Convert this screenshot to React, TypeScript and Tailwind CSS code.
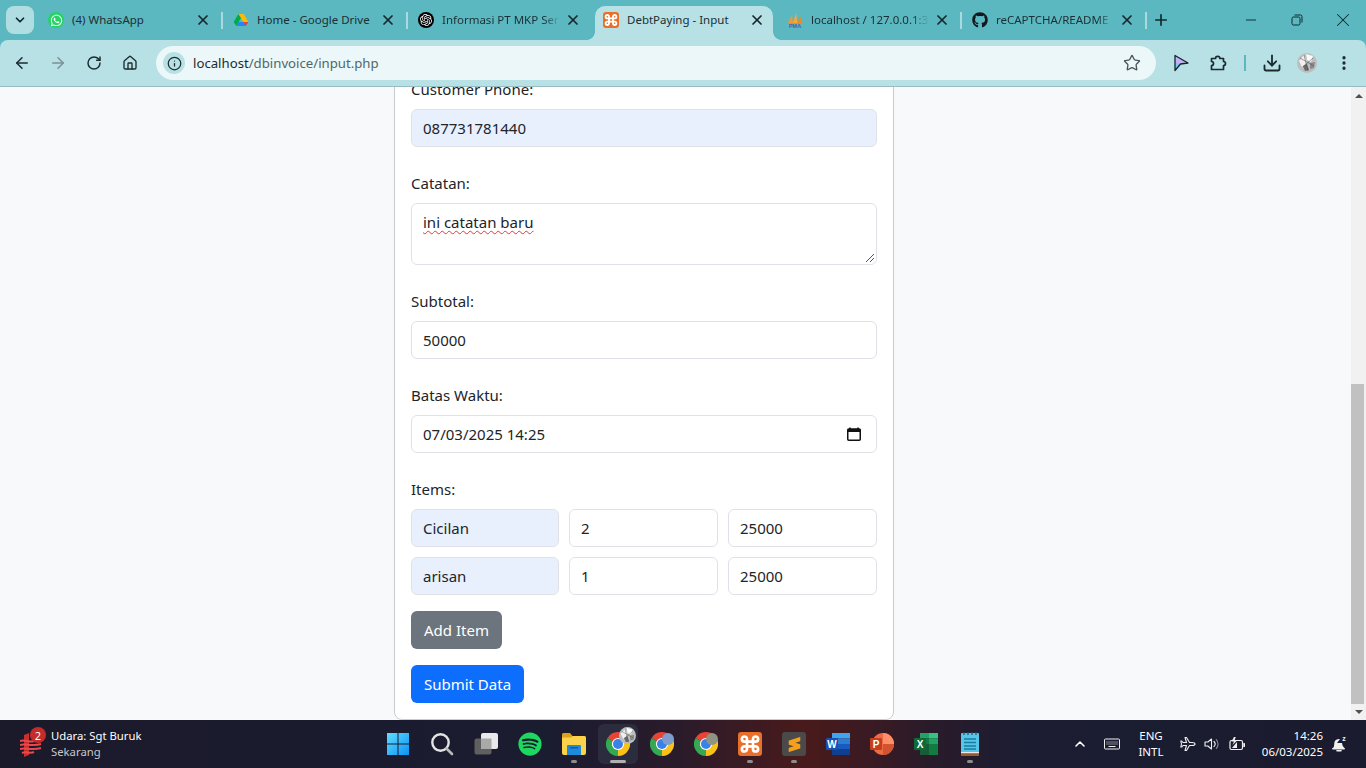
import type { ReactNode } from "react";
import {
  ArrowLeft, ArrowRight, ChevronDown, ChevronUp, Download, House, Info,
  Minus, MoreVertical, Plus, RotateCw, Star, X,
} from "lucide-react";
import { FaGithub, FaSpotify, FaWhatsapp } from "react-icons/fa";
import { SiOpenai, SiSublimetext } from "react-icons/si";

function ChromeLogo({ size = 24 }: { size?: number }) {
  return (
    <svg width={size} height={size} viewBox="1 1 22 22">
      <path d="M12 12 L2.47 6.5 A11 11 0 0 1 21.53 6.5 Z" fill="#ea4335" />
      <path d="M12 12 L2.47 6.5 A11 11 0 0 0 12 23 Z" fill="#34a853" />
      <path d="M12 12 L21.53 6.5 A11 11 0 0 1 12 23 Z" fill="#fbc116" />
      <circle cx="12" cy="12" r="5.6" fill="#fff" />
      <circle cx="12" cy="12" r="4.6" fill="#3b82e8" />
    </svg>
  );
}

function Avatar({ size = 20 }: { size?: number }) {
  return (
    <svg width={size} height={size} viewBox="0 0 20 20">
      <circle cx="10" cy="10" r="10" fill="#bdbdbd" />
      <path d="M2 8 L7 2 L10 9 L5 14 Z" fill="#f0f0f0" />
      <path d="M9 1 L16 3 L14 9 L10 7 Z" fill="#fafafa" />
      <path d="M6 13 L10 11 L12 17 L8 18 Z" fill="#6a6a6a" />
      <path d="M13 10 L18 9 L17 15 L13 16 Z" fill="#8a8a8a" />
      <path d="M3 5 L17 13 M7 2 L11 18 M16 5 L6 14" stroke="#4a4a4a" strokeWidth="0.5" />
    </svg>
  );
}

function XamppIcon({ size = 16 }: { size?: number }) {
  return (
    <span className="flex shrink-0 items-center justify-center rounded-[3px] bg-[#e8702a]" style={{ width: size, height: size }}>
      <svg width={size} height={size} viewBox="0 0 16 16" fill="none" stroke="#fff" strokeWidth="1.8">
        <path d="M6 6 V4.7 A1.7 1.7 0 1 0 4.3 6.4 H11.7 A1.7 1.7 0 1 0 10 4.7 V11.3 A1.7 1.7 0 1 0 11.7 9.6 H4.3 A1.7 1.7 0 1 0 6 11.3 Z" />
      </svg>
    </span>
  );
}

function DriveIcon() {
  return (
    <svg width="16" height="16" viewBox="0 0 24 24">
      <path d="M8 3 L16 3 L23 15 L15.5 15 Z" fill="#ffba00" />
      <path d="M8 3 L1 15 L5 21 L12 9 Z" fill="#00ac47" />
      <path d="M5 21 L19 21 L23 15 L8.6 15 Z" fill="#2684fc" />
      <path d="M19 21 L23 15 L15.5 15 Z" fill="#ea4335" />
    </svg>
  );
}

function PmaIcon() {
  return (
    <svg width="16" height="16" viewBox="0 0 16 16">
      <path d="M1 11 L5 3 L6 11 Z" fill="#f29a2e" />
      <path d="M6 11 L9 1 L10.5 11 Z" fill="#f6a937" />
      <path d="M11 11 L12.5 3 L15.5 11 Z" fill="#ec8a1e" />
      <text x="8" y="15.5" textAnchor="middle" fontSize="5.5" fontWeight="700" fill="#51609a" fontFamily="Liberation Sans, sans-serif">PMA</text>
    </svg>
  );
}

function CursorIcon() {
  return (
    <svg width="18" height="18" viewBox="0 0 18 18">
      <path d="M3 1.5 L16 9 L8.5 10 L3 16.5 Z" fill="#c3b2f6" />
      <path d="M3 8.5 L8.5 10 L3 16.5 Z" fill="#7cc8f0" />
      <path d="M3 1.5 L16 9 L8.5 10 L3 16.5 Z" fill="none" stroke="#16232a" strokeWidth="1.3" strokeLinejoin="round" />
    </svg>
  );
}

function ExtensionIcon() {
  return (
    <svg width="18" height="18" viewBox="0 0 18 18" fill="none" stroke="#1c2b2e" strokeWidth="1.7" strokeLinejoin="round">
      <path d="M2.5 4.5 H6.5 A2.2 2.2 0 0 1 10.9 4.5 H14.5 V7.5 A2 2 0 0 1 14.5 11.5 V15.5 H2.5 V11.5 A2 2 0 0 0 2.5 7.5 Z" />
    </svg>
  );
}

function RestoreIcon() {
  return (
    <svg width="12" height="12" viewBox="0 0 12 12" fill="none" stroke="#10282c" strokeWidth="1">
      <rect x="1" y="3" width="8" height="8" rx="1.5" />
      <path d="M3.5 1 H9.5 A1.5 1.5 0 0 1 11 2.5 V8.5" />
    </svg>
  );
}

function CalendarIcon() {
  return (
    <svg width="14" height="14" viewBox="0 0 14 14">
      <path d="M3 0.5 V3 M11 0.5 V3" stroke="#111" strokeWidth="1.5" />
      <rect x="0.75" y="2" width="12.5" height="11.25" rx="1" fill="none" stroke="#111" strokeWidth="1.5" />
      <rect x="0.75" y="2" width="12.5" height="3" fill="#111" />
    </svg>
  );
}

function WindowsLogo() {
  return (
    <svg width="24" height="24" viewBox="0 0 24 24">
      <defs>
        <linearGradient id="win" x1="0" y1="0" x2="1" y2="1">
          <stop offset="0" stopColor="#62dcff" />
          <stop offset="1" stopColor="#0b92f2" />
        </linearGradient>
      </defs>
      <path d="M1 1 H11.5 V11.5 H1 Z M12.5 1 H23 V11.5 H12.5 Z M1 12.5 H11.5 V23 H1 Z M12.5 12.5 H23 V23 H12.5 Z" fill="url(#win)" />
    </svg>
  );
}

function SearchIcon() {
  return (
    <svg width="24" height="24" viewBox="0 0 24 24" fill="none" strokeLinecap="round">
      <circle cx="10.5" cy="10.5" r="8.2" stroke="#e4e4e4" strokeWidth="2.4" />
      <path d="M16.5 16.5 L22 22" stroke="#b9b9b9" strokeWidth="2.6" />
    </svg>
  );
}

function TaskViewIcon() {
  return (
    <svg width="24" height="24" viewBox="0 0 24 24">
      <rect x="0.5" y="6.5" width="17" height="16" rx="2" fill="#5f5f5f" />
      <rect x="7" y="1" width="17" height="16" rx="2" fill="#e9e9e9" />
      <rect x="7" y="6.5" width="10.5" height="10.5" fill="#a9a9a9" />
    </svg>
  );
}

function FolderIcon() {
  return (
    <svg width="24" height="24" viewBox="0 0 24 24">
      <path d="M0 2.5 A1.5 1.5 0 0 1 1.5 1 H8 L10.5 4 H22 A2 2 0 0 1 24 6 V8 H0 Z" fill="#d9a21f" />
      <path d="M0 5.5 H9 L11 4 H22 A2 2 0 0 1 24 6 V21 A2 2 0 0 1 22 23 H2 A2 2 0 0 1 0 21 Z" fill="#fbd249" />
      <path d="M5 14 A1 1 0 0 1 6 13 H18 A1 1 0 0 1 19 14 V23 H5 Z" fill="#1f8ad8" />
      <rect x="8" y="15" width="8" height="1.5" fill="#0f5d9e" />
    </svg>
  );
}

function WordIcon() {
  return (
    <svg width="24" height="22" viewBox="0 0 24 22">
      <path d="M6 0 H24 V5.5 H6 Z" fill="#41a5ee" />
      <path d="M6 5.5 H24 V11 H6 Z" fill="#2b7cd3" />
      <path d="M6 11 H24 V16.5 H6 Z" fill="#185abd" />
      <path d="M6 16.5 H24 V22 H6 Z" fill="#103f91" />
      <rect x="0" y="5" width="12" height="12" rx="1" fill="#1650b0" />
      <text x="6" y="14.5" textAnchor="middle" fontSize="10" fontWeight="700" fill="#fff" fontFamily="Liberation Sans, sans-serif">W</text>
    </svg>
  );
}

function PowerPointIcon() {
  return (
    <svg width="24" height="22" viewBox="0 0 24 22">
      <circle cx="13" cy="11" r="11" fill="#ed6c47" />
      <path d="M13 0 A11 11 0 0 1 24 11 H13 Z" fill="#ff8f6b" />
      <path d="M13 11 H24 A11 11 0 0 1 13 22 Z" fill="#d35230" />
      <rect x="0" y="5" width="12" height="12" rx="1" fill="#c43e1c" />
      <text x="6" y="14.5" textAnchor="middle" fontSize="10" fontWeight="700" fill="#fff" fontFamily="Liberation Sans, sans-serif">P</text>
    </svg>
  );
}

function ExcelIcon() {
  return (
    <svg width="24" height="22" viewBox="0 0 24 22">
      <path d="M6 0 H15 V5.5 H6 Z" fill="#21a366" />
      <path d="M15 0 H24 V5.5 H15 Z" fill="#33c481" />
      <path d="M6 5.5 H15 V11 H6 Z" fill="#107c41" />
      <path d="M15 5.5 H24 V11 H15 Z" fill="#21a366" />
      <path d="M6 11 H15 V22 H6 Z" fill="#185c37" />
      <path d="M15 11 H24 V22 H15 Z" fill="#107c41" />
      <rect x="0" y="5" width="12" height="12" rx="1" fill="#0e6b38" />
      <text x="6" y="14.5" textAnchor="middle" fontSize="10" fontWeight="700" fill="#fff" fontFamily="Liberation Sans, sans-serif">X</text>
    </svg>
  );
}

function NotepadIcon() {
  return (
    <svg width="20" height="24" viewBox="0 0 20 24">
      <rect x="1" y="1" width="18" height="23" rx="1" fill="#55c5ea" />
      <rect x="1" y="21" width="18" height="3" fill="#9c5a2c" />
      <rect x="1" y="20" width="18" height="1.2" fill="#e8e8e8" />
      <path d="M4 0 V3 M8 0 V3 M12 0 V3 M16 0 V3" stroke="#21556b" strokeWidth="1.2" />
      <path d="M4 7 H16 M4 10.5 H16 M4 14 H16 M4 17 H16" stroke="#1a7ba0" strokeWidth="1.6" />
    </svg>
  );
}

function AirQualityIcon() {
  return (
    <svg width="22" height="26" viewBox="0 0 22 26">
      <path d="M4 4 L9 2 V24 L4 26 Z" fill="#c92f2f" />
      <path d="M0 10 C5 8 9 12 14 10 M0 14 C5 12 12 16 21 13 M0 18 C5 16 12 20 21 17 M2 22 C6 20 10 23 14 21" fill="none" stroke="#e8494a" strokeWidth="2" />
    </svg>
  );
}

function KeyboardIcon() {
  return (
    <svg width="16" height="12" viewBox="0 0 16 12" fill="none" stroke="#f0f0f0">
      <rect x="0.5" y="1" width="15" height="10" rx="1" strokeWidth="1" />
      <path d="M2.5 4 H13.5 M2.5 6 H13.5" strokeWidth="1" strokeDasharray="1 1" />
      <path d="M4.5 8.5 H11.5" strokeWidth="1" />
    </svg>
  );
}

function PlaneIcon() {
  return (
    <svg width="16" height="16" viewBox="0 0 16 16" fill="none" stroke="#f0f0f0" strokeWidth="1.1" strokeLinejoin="round">
      <path d="M15 8 C15 7 13.5 6.5 12 6.5 H9.5 L6.5 1.5 H5 L6.5 6.5 H3 L1.8 5 H0.8 L1.5 8 L0.8 11 H1.8 L3 9.5 H6.5 L5 14.5 H6.5 L9.5 9.5 H12 C13.5 9.5 15 9 15 8 Z" />
    </svg>
  );
}

function VolumeIcon() {
  return (
    <svg width="16" height="16" viewBox="0 0 16 16" fill="none" strokeLinecap="round">
      <path d="M1 6 H3.8 L7.5 3 V13 L3.8 10 H1 Z" stroke="#f0f0f0" strokeWidth="1.1" strokeLinejoin="round" />
      <path d="M10 5.5 A3.6 3.6 0 0 1 10 10.5" stroke="#f0f0f0" strokeWidth="1.1" />
      <path d="M12.3 3.5 A6.6 6.6 0 0 1 12.3 12.5" stroke="#8a8a92" strokeWidth="1.1" />
    </svg>
  );
}

function BatteryIcon() {
  return (
    <svg width="16" height="14" viewBox="0 0 16 14">
      <rect x="1" y="3.5" width="12.5" height="9" rx="1.5" fill="none" stroke="#f0f0f0" strokeWidth="1.2" />
      <rect x="14.3" y="6" width="1.7" height="4" rx="0.6" fill="#f0f0f0" />
      <path d="M3 11 L8 5 V11 Z" fill="#f0f0f0" />
      <path d="M5 0 L2.5 4.5 H5 L3.5 8 L8 3.5 H5.5 L6.8 0 Z" fill="#f0f0f0" />
    </svg>
  );
}

function BellSnoozeIcon() {
  return (
    <svg width="16" height="18" viewBox="0 0 16 18" fill="none">
      <path d="M2 13 C3.5 11.5 3 9 3.5 7 C4 5 6 4 8 4 L9 4 L6 8 H11 C11.5 10 11.5 11.5 13.5 13 Z" fill="#f0f0f0" />
      <rect x="1" y="13" width="13" height="1.6" rx="0.8" fill="#f0f0f0" />
      <path d="M6 15.8 H10" stroke="#f0f0f0" strokeWidth="1.6" strokeLinecap="round" />
      <text x="13" y="6" textAnchor="middle" fontSize="7" fontWeight="700" fill="#f0f0f0" fontFamily="Liberation Sans, sans-serif">z</text>
    </svg>
  );
}

function Tab({ icon, title, separator, fade }: { icon: ReactNode; title: string; separator?: boolean; fade?: boolean }) {
  return (
    <div className="flex h-10 w-[185px] shrink-0 items-center pl-2">
      <span className="flex h-4 w-4 shrink-0 items-center justify-center">{icon}</span>
      <span className={`ml-2 w-[118px] shrink-0 whitespace-nowrap text-[11.5px] text-[#1c2f33] ${fade ? "[mask-image:linear-gradient(to_right,black_86%,transparent)]" : ""}`}>
        {title}
      </span>
      <X size={16} strokeWidth={2.6} className="ml-[5px] shrink-0 text-[#16282c]" />
      {separator && <span className="ml-[10px] h-[17px] w-[2px] shrink-0 bg-[#a8dae0]" />}
    </div>
  );
}

function ActiveTab() {
  return (
    <div className="relative mr-[6px] mt-[6px] flex h-[34px] w-[178px] shrink-0 items-center rounded-t-[10px] bg-[#b7e1e5] pb-[6px] pl-2">
      <span className="absolute bottom-0 left-[-8px] h-2 w-2 bg-[radial-gradient(circle_at_0_0,transparent_7.5px,#b7e1e5_8px)]" />
      <span className="absolute bottom-0 right-[-8px] h-2 w-2 bg-[radial-gradient(circle_at_100%_0,transparent_7.5px,#b7e1e5_8px)]" />
      <XamppIcon />
      <span className="ml-2 w-[118px] shrink-0 whitespace-nowrap text-[11.5px] text-[#1c2f33]">DebtPaying - Input</span>
      <X size={16} strokeWidth={2.6} className="ml-[4px] shrink-0 text-[#16282c]" />
    </div>
  );
}

function TabStrip() {
  return (
    <div className="flex h-10 items-center bg-[#5bb8c1] pl-[6px]">
      <button className="flex h-7 w-7 shrink-0 items-center justify-center rounded-lg bg-[#b0dde2]">
        <ChevronDown size={14} strokeWidth={3} className="text-[#10282c]" />
      </button>
      <div className="ml-[6px] flex items-start">
        <Tab
          title="(4) WhatsApp"
          separator
          icon={
            <span className="flex h-4 w-4 items-center justify-center rounded-full bg-[#25d366] text-white">
              <FaWhatsapp size={13} />
            </span>
          }
        />
        <Tab title="Home - Google Drive" separator icon={<DriveIcon />} />
        <Tab
          title="Informasi PT MKP Ser"
          fade
          icon={
            <span className="flex h-4 w-4 items-center justify-center rounded-full bg-black text-white">
              <SiOpenai size={12} />
            </span>
          }
        />
        <ActiveTab />
        <Tab title="localhost / 127.0.0.1:3" fade icon={<PmaIcon />} separator />
        <Tab title="reCAPTCHA/README" fade icon={<FaGithub size={16} className="text-[#16181c]" />} separator />
      </div>
      <Plus size={18} strokeWidth={2.2} className="ml-[3px] shrink-0 text-[#10282c]" />
      <Minus size={16} strokeWidth={1.4} className="ml-[73px] shrink-0 text-[#10282c]" />
      <span className="ml-[32px] shrink-0"><RestoreIcon /></span>
      <X size={22} strokeWidth={1.1} className="ml-[29px] shrink-0 text-[#10282c]" />
    </div>
  );
}

function Toolbar() {
  return (
    <div className="h-[47px] bg-[#5bb8c1]">
      <div className="flex h-[47px] items-center rounded-t-lg border-b border-[#98bcc2] bg-[#b7e1e5] pl-[13px]">
        <ArrowLeft size={18} strokeWidth={2} className="shrink-0 text-[#1c2b2e]" />
        <ArrowRight size={18} strokeWidth={2} className="ml-[18px] shrink-0 text-[#7a9296]" />
        <RotateCw size={16} strokeWidth={2.2} className="ml-[19px] shrink-0 text-[#1c2b2e]" />
        <House size={16} strokeWidth={2} className="ml-[20px] shrink-0 text-[#1c2b2e]" />
        <div className="ml-[18px] flex h-[34px] w-[1000px] shrink-0 items-center justify-between rounded-full bg-[#ebf7f8] pl-[7px] pr-[15px]">
          <div className="flex items-center">
            <span className="flex h-[22px] w-[22px] items-center justify-center rounded-full bg-[#b7e1e5]">
              <Info size={15} strokeWidth={2} className="text-[#1c2b2e]" />
            </span>
            <span className="ml-2 whitespace-nowrap pt-[1px] text-[13.2px] text-[#1c2b2e]">
              localhost<span className="text-[#51666a]">/dbinvoice/input.php</span>
            </span>
          </div>
          <Star size={18} strokeWidth={1.8} className="text-[#4a5659]" />
        </div>
        <span className="ml-4 shrink-0"><CursorIcon /></span>
        <span className="ml-[19px] shrink-0"><ExtensionIcon /></span>
        <span className="ml-[17px] h-4 w-[2px] shrink-0 bg-[#5bb8c1]" />
        <Download size={20} strokeWidth={2.2} className="ml-4 shrink-0 text-[#1c2b2e]" />
        <span className="ml-[15px] shrink-0"><Avatar /></span>
        <MoreVertical size={18} strokeWidth={2.4} className="ml-[18px] shrink-0 text-[#1c2b2e]" />
      </div>
    </div>
  );
}

const field = "block h-[38px] w-full rounded-md border border-[#dee2e6] pl-[11px] pr-3 text-[15px] text-[#212529] outline-none";
const filled = `${field} bg-[#e8f0fe]`;
const plain = `${field} bg-white`;

function Group({ label, children }: { label: string; children: ReactNode }) {
  return (
    <div className="mb-6">
      <label className="mb-2 block h-6 text-[15px] leading-6 text-[#212529]">{label}</label>
      {children}
    </div>
  );
}

function FormCard() {
  return (
    <form className="-mt-[27px] h-fit w-[500px] shrink-0 rounded-lg border border-[#c9cccf] bg-white p-4">
      <Group label="Customer Phone:">
        <input className={filled} value="087731781440" readOnly />
      </Group>
      <Group label="Catatan:">
        <div className="relative h-[62px] rounded-md border border-[#dee2e6] bg-white py-[6px] pl-[11px] pr-3 text-[15px] leading-6 text-[#212529]">
          <span className="underline decoration-[#e5383b] decoration-wavy decoration-1 underline-offset-2">ini catatan baru</span>
          <svg width="10" height="10" viewBox="0 0 10 10" className="absolute bottom-[1px] right-[1px]">
            <path d="M1 9 L9 1 M5 9 L9 5" stroke="#555" strokeWidth="1" />
          </svg>
        </div>
      </Group>
      <Group label="Subtotal:">
        <input className={plain} value="50000" readOnly />
      </Group>
      <Group label="Batas Waktu:">
        <div className={`${plain} flex items-center justify-between !pr-[15px]`}>
          <span>07/03/2025 14:25</span>
          <CalendarIcon />
        </div>
      </Group>
      <div className="mb-4">
        <label className="mb-2 block h-6 text-[15px] leading-6 text-[#212529]">Items:</label>
        <div className="grid grid-cols-[148px_149px_149px] gap-[10px]">
          <input className={`${filled} min-w-0`} value="Cicilan" readOnly />
          <input className={`${plain} min-w-0`} value="2" readOnly />
          <input className={`${plain} min-w-0`} value="25000" readOnly />
          <input className={`${filled} min-w-0`} value="arisan" readOnly />
          <input className={`${plain} min-w-0`} value="1" readOnly />
          <input className={`${plain} min-w-0`} value="25000" readOnly />
        </div>
      </div>
      <button type="button" className="mb-4 block h-[38px] w-[91px] rounded-md bg-[#6c757d] text-[15px] text-white">
        Add Item
      </button>
      <button type="button" className="block h-[38px] w-[113px] rounded-md bg-[#0d6efd] text-[15px] text-white">
        Submit Data
      </button>
    </form>
  );
}

function Scrollbar() {
  return (
    <div className="flex w-[15px] shrink-0 flex-col bg-[#f1f1f1]">
      <div className="flex h-[17px] items-center justify-center">
        <span className="h-0 w-0 border-x-[4px] border-b-[4px] border-x-transparent border-b-[#505050]" />
      </div>
      <div className="mr-[2px] mt-[280px] h-[320px] bg-[#c1c1c1]" />
      <div className="flex flex-1 items-center justify-center">
        <span className="h-0 w-0 border-x-[4px] border-t-[4px] border-x-transparent border-t-[#505050]" />
      </div>
    </div>
  );
}

function Pin({ children, dot, active }: { children: ReactNode; dot?: boolean; active?: boolean }) {
  return (
    <div className="relative flex h-12 w-11 shrink-0 items-center justify-center">
      {active && <span className="absolute inset-x-[2px] inset-y-[4px] rounded-md bg-[#2b2c3d]" />}
      <span className="relative flex items-center justify-center">{children}</span>
      {dot && <span className={`absolute bottom-[5px] h-[3px] rounded-full ${active ? "w-4 bg-[#b0b0b0]" : "w-[6px] bg-[#8d8d8d]"}`} />}
    </div>
  );
}

function Taskbar() {
  return (
    <div className="grid h-12 shrink-0 grid-cols-[376px_616px_1fr] bg-[linear-gradient(90deg,#1b1a2b_0%,#1a1c30_40%,#2b1b2a_50%,#4a1a1b_59%,#2a1b2a_68%,#1b1d32_75%,#1a1b2e_100%)] text-white">
      <div className="flex items-center pl-5">
        <div className="relative shrink-0">
          <AirQualityIcon />
          <span className="absolute -right-[4px] -top-[4px] flex h-4 w-4 items-center justify-center rounded-full bg-[#c42b2b] text-[11px] leading-none">2</span>
        </div>
        <div className="ml-[9px] text-[11.3px] leading-4">
          <div className="whitespace-nowrap">Udara: Sgt Buruk</div>
          <div className="text-[#c6c6c9]">Sekarang</div>
        </div>
      </div>
      <div className="flex">
        <Pin><WindowsLogo /></Pin>
        <Pin><SearchIcon /></Pin>
        <Pin><TaskViewIcon /></Pin>
        <Pin><FaSpotify size={24} className="text-[#1ed760]" /></Pin>
        <Pin dot><FolderIcon /></Pin>
        <Pin dot active>
          <ChromeLogo />
          <span className="absolute -right-[6px] -top-[5px]"><Avatar size={17} /></span>
        </Pin>
        <Pin>
          <ChromeLogo />
          <span className="absolute right-0 top-[1px] h-[12px] w-[12px] rounded-full bg-[#7f9ccf]" />
        </Pin>
        <Pin>
          <ChromeLogo />
          <span className="absolute right-0 top-[1px] h-[12px] w-[12px] rounded-full bg-[#8e9382]" />
        </Pin>
        <Pin dot><XamppIcon size={24} /></Pin>
        <Pin dot>
          <span className="flex h-6 w-6 items-center justify-center rounded-[3px] bg-[#4a4a4a] text-[#f59f1b]">
            <SiSublimetext size={15} />
          </span>
        </Pin>
        <Pin><WordIcon /></Pin>
        <Pin><PowerPointIcon /></Pin>
        <Pin><ExcelIcon /></Pin>
        <Pin dot><NotepadIcon /></Pin>
      </div>
      <div className="flex items-center">
        <ChevronUp size={16} strokeWidth={2.4} className="ml-[80px] shrink-0" />
        <span className="ml-[16px] shrink-0"><KeyboardIcon /></span>
        <div className="ml-[18px] w-[26px] shrink-0 text-center text-[11.5px] leading-[16px]">ENG<br />INTL</div>
        <span className="ml-[16px] shrink-0"><PlaneIcon /></span>
        <span className="ml-[8px] shrink-0"><VolumeIcon /></span>
        <span className="ml-[9px] shrink-0"><BatteryIcon /></span>
        <div className="ml-[8px] w-[70px] shrink-0 whitespace-nowrap text-right text-[11.5px] leading-[16px]">
          14:26<br />06/03/2025
        </div>
        <span className="ml-[8px] shrink-0"><BellSnoozeIcon /></span>
      </div>
    </div>
  );
}

export default function App() {
  return (
    <div className="flex h-screen w-[1366px] flex-col overflow-hidden bg-[#f8f9fa] font-['Noto_Sans',sans-serif]">
      <TabStrip />
      <Toolbar />
      <main className="flex min-h-0 flex-1">
        <div className="flex min-w-0 flex-1 overflow-hidden pl-[394px]">
          <FormCard />
        </div>
        <Scrollbar />
      </main>
      <Taskbar />
    </div>
  );
}
